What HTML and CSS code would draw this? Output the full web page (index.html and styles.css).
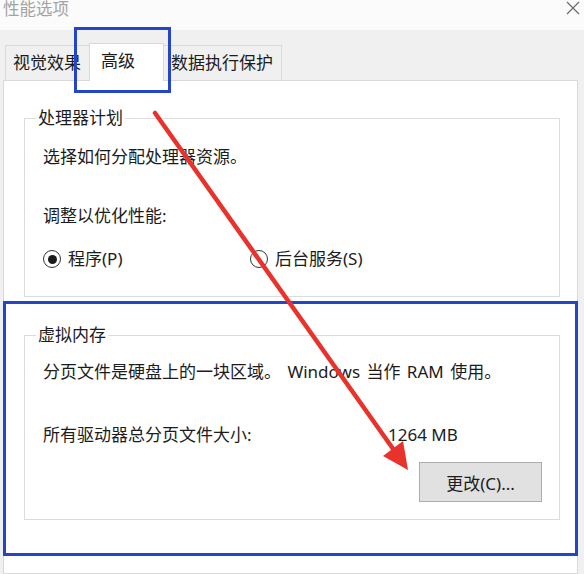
FILE: index.html
```html
<!DOCTYPE html>
<html lang="zh-CN">
<head>
<meta charset="utf-8">
<title>性能选项</title>
<link rel="stylesheet" href="styles.css">
</head>
<body>
<div class="window">
  <div class="titlebar">
    <span class="title">性能选项</span>
    <svg class="close" width="14" height="14" viewBox="0 0 14 14"><path d="M1 1 L13 13 M13 1 L1 13" stroke="#6a6a6a" stroke-width="1.2" fill="none"/></svg>
  </div>
  <div class="body">
    <div class="tabs">
      <div class="tab t1">视觉效果</div>
      <div class="tab active">高级</div>
      <div class="tab t3">数据执行保护</div>
    </div>
    <div class="panel">
      <fieldset class="group g1">
        <legend>处理器计划</legend>
        <div class="gbody">
          <p class="line l1">选择如何分配处理器资源。</p>
          <p class="line l2">调整以优化性能:</p>
          <div class="radios">
            <label class="radio"><span class="dot checked"></span>程序(P)</label>
            <label class="radio"><span class="dot"></span>后台服务(S)</label>
          </div>
        </div>
      </fieldset>
      <fieldset class="group g2">
        <legend>虚拟内存</legend>
        <div class="gbody gbody2">
          <p class="line l3">分页文件是硬盘上的一块区域。 Windows 当作 RAM 使用。</p>
          <div class="size-row"><span>所有驱动器总分页文件大小:</span><span>1264 MB</span></div>
          <div class="btn-row"><button class="btn">更改(C)...</button></div>
        </div>
      </fieldset>
    </div>
  </div>
  <div class="hl hl-tab"></div>
  <div class="hl hl-vm"></div>
  <svg class="arrow" width="584" height="574" viewBox="0 0 584 574">
    <line x1="155" y1="113" x2="396" y2="453" stroke="#e8322b" stroke-width="4.5" stroke-linecap="round"/>
    <polygon points="408,470 383,456 403,441" fill="#e8322b"/>
  </svg>
</div>
</body>
</html>
```
FILE: styles.css
```css
* { box-sizing: border-box; }
html, body { margin: 0; padding: 0; }
body {
  width: 584px;
  height: 574px;
  overflow: hidden;
  background: #ffffff;
  font-family: "Noto Sans", "Noto Sans CJK SC", "Microsoft YaHei", sans-serif;
  font-size: 17px;
  color: #1c1c1c;
}
.window {
  position: relative;
  width: 584px;
  height: 574px;
  display: flex;
  flex-direction: column;
}
.titlebar {
  height: 30px;
  flex: none;
  display: flex;
  justify-content: space-between;
  align-items: flex-start;
  padding: 0 4px 0 3px;
  background: #fbfbfb;
}
.title {
  display: block;
  margin-top: 0;
  line-height: 18px;
  font-size: 16.5px;
  color: #a3a3a3;
}
.close { margin-top: 1px; }
.body {
  flex: 1;
  display: flex;
  flex-direction: column;
  background: #f0f0f0;
  padding: 0 6px 0 3px;
}
.tabs {
  height: 50px;
  flex: none;
  display: flex;
  align-items: flex-end;
  padding-left: 2px;
}
.tab {
  height: 35px;
  line-height: 34px;
  border: 1px solid #d9d9d9;
  border-bottom: none;
  background: #f0f0f0;
  white-space: nowrap;
}
.t1 { padding: 0 8px 0 7px; border-right: none; }
.t3 { padding: 0 8px 0 7px; border-left: none; }
.tab.active {
  position: relative;
  z-index: 1;
  height: 38px;
  margin-bottom: -1px;
  background: #ffffff;
  padding: 0 28px 0 11px;
  line-height: 34px;
}
.panel {
  flex: 1;
  background: #ffffff;
  border: 1px solid #d9d9d9;
  padding: 0 17px 0 20px;
}
.group {
  margin: 0;
  padding: 0;
  border: 1px solid #dcdcdc;
  min-width: 0;
}
.group legend {
  margin-left: 11px;
  padding: 0 2px;
  line-height: 22px;
}
.g1 { margin-top: 26px; }
.g2 { margin-top: 27px; }
.gbody { padding: 0 17px 26px 18px; }
.gbody2 { padding-bottom: 17px; }
.line { margin: 0; line-height: 22px; white-space: nowrap; }
.l1 { margin-top: 17px; }
.l2 { margin-top: 37px; }
.l3 { margin-top: 15px; word-spacing: 2px; }
.radios {
  margin-top: 21px;
  display: grid;
  grid-template-columns: 207px auto;
  line-height: 22px;
}
.radio {
  display: flex;
  align-items: center;
  gap: 7px;
}
.dot {
  width: 18px;
  height: 18px;
  border-radius: 50%;
  border: 1.6px solid #333333;
  display: flex;
  align-items: center;
  justify-content: center;
}
.dot.checked::after {
  content: "";
  width: 9px;
  height: 9px;
  border-radius: 50%;
  background: #1a1a1a;
}
.size-row {
  margin-top: 41px;
  display: grid;
  grid-template-columns: 345px auto;
  line-height: 22px;
  white-space: nowrap;
}
.btn-row {
  margin-top: 16px;
  display: flex;
  justify-content: flex-end;
}
.btn {
  width: 123px;
  height: 40px;
  background: #e1e1e1;
  border: 1px solid #adadad;
  font-family: inherit;
  font-size: 17px;
  color: #1c1c1c;
  padding: 0;
}
.hl {
  position: absolute;
  border: 3px solid #2446c6;
  pointer-events: none;
}
.hl-tab { left: 74px; top: 27px; width: 97px; height: 66px; }
.hl-vm { left: 3px; top: 301px; width: 575px; height: 255px; }
.arrow {
  position: absolute;
  left: 0;
  top: 0;
  pointer-events: none;
}
```
